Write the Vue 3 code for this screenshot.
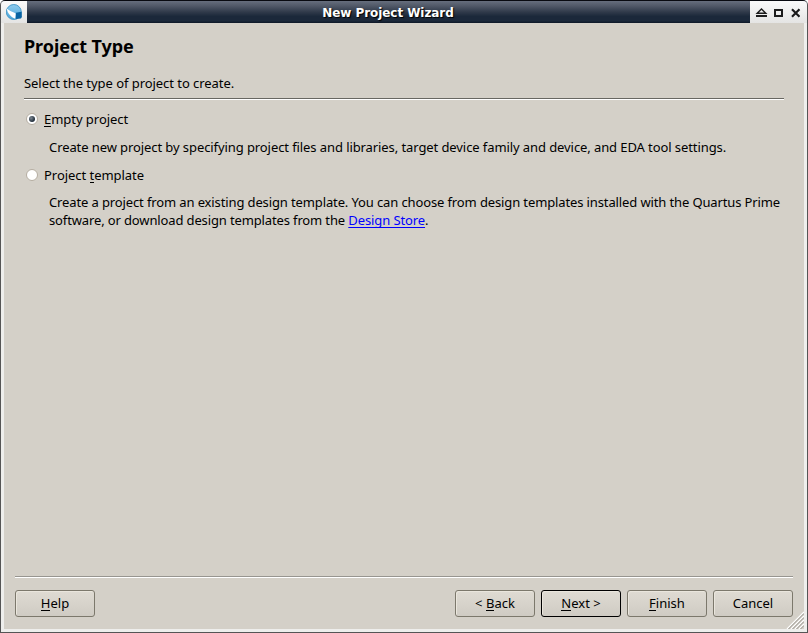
<script setup>
import { ref } from 'vue'

const projectType = ref('empty')
</script>

<template>
  <div class="window">
    <header class="titlebar">
      <div class="app-icon">
        <svg width="18" height="18" viewBox="0 0 18 18">
          <defs>
            <linearGradient id="globe" x1="0" y1="0" x2="0" y2="1">
              <stop offset="0" stop-color="#8fcbed" />
              <stop offset="1" stop-color="#4ba6da" />
            </linearGradient>
          </defs>
          <circle cx="7.8" cy="8" r="7.5" fill="url(#globe)" stroke="#3d94c6" stroke-width="0.9" />
          <path d="M0.8 4.5C3 7 6.5 7.5 10 9.5L9.2 14.8C5 13 1.500 9.500 .8 4.500z" fill="#fff" />
          <path d="M9.8 8.8l5.800-1 .3 5.200-1 1.500-5.100.5z" fill="#0863a2" />
        </svg>
      </div>
      <h1 class="caption">New Project Wizard</h1>
      <div class="controls">
        <svg width="56" height="21" viewBox="0 0 56 21" fill="none" stroke="#1c1c1c" stroke-width="2">
          <path d="M7.200 12.300L11.500 8l4.300 4.300z" stroke-width="1.400" />
          <path d="M6 15h11" />
          <path d="M25 9h7v6h-7z" />
          <path d="M42 8.200l7.500 7.500M49.500 8.200l-7.500 7.500" stroke-width="2.200" />
        </svg>
      </div>
    </header>

    <div class="frame">
      <main class="page">
        <h2 class="heading">Project Type</h2>
        <p class="intro">Select the type of project to create.</p>
        <div class="rule"></div>
        <label class="option" @click="projectType = 'empty'">
          <span class="radio" :class="{ checked: projectType === 'empty' }"></span>
          <span class="option-label"><u>E</u>mpty project</span>
        </label>
        <p class="detail first">
          <span>Create new project by specifying project files and libraries, target device family and device, and EDA tool settings.</span>
        </p>
        <label class="option template" @click="projectType = 'template'">
          <span class="radio" :class="{ checked: projectType === 'template' }"></span>
          <span class="option-label">Project <u>t</u>emplate</span>
        </label>
        <p class="detail second">
          <span>Create a project from an existing design template. You can choose from design templates installed with the Quartus Prime</span>
          <span class="last-line">software, or download design templates from the <a>Design Store</a>.</span>
        </p>
      </main>

      <footer class="footer">
        <div class="buttons">
          <button class="help"><span><u>H</u>elp</span></button>
          <button><span>&lt; <u>B</u>ack</span></button>
          <button class="default"><span><u>N</u>ext &gt;</span></button>
          <button><span><u>F</u>inish</span></button>
          <button><span>Cancel</span></button>
        </div>
        <svg class="grip" width="18" height="18" viewBox="0 0 18 18" fill="none">
          <path d="M1 18L18 1M5 18L18 5M9 18L18 9M13 18L18 13" stroke="#fff" stroke-width="1.2" />
          <path d="M2.5 18L18 2.5M6.5 18L18 6.5M10.5 18L18 10.5M14.5 18L18 14.5" stroke="#99968f" />
        </svg>
      </footer>
    </div>
  </div>
</template>

<style>
body {
  margin: 0;
  background: #fff;
}
</style>

<style scoped>
* {
  box-sizing: border-box;
}

.window {
  width: 808px;
  height: 633px;
  display: flex;
  flex-direction: column;
  overflow: hidden;
  border: 1px solid #555;
  border-top-color: #080a10;
  border-radius: 5px 5px 0 0;
  background: #eeeeec;
  color: #000;
  font-family: "Noto Sans", sans-serif;
  font-size: 13px;
}

.titlebar {
  height: 22px;
  display: flex;
  background: linear-gradient(#666e7d 0, #535b6a 20%, #303a4a 50%, #1b283a 70%, #1b283a 90%, #0d1726 100%);
}

.app-icon,
.controls {
  background: linear-gradient(#fafafa, #e4e4e3);
}

.app-icon {
  width: 26px;
  padding: 3px 0 0 5px;
}

.app-icon svg,
.controls svg {
  display: block;
}

.controls {
  width: 57px;
}

.caption {
  flex: 1;
  margin: 0;
  padding-top: 1px;
  padding-right: 1px;
  text-align: center;
  color: #fff;
  font: bold 12px/23px "DejaVu Sans", sans-serif;
  letter-spacing: -0.06px;
  text-shadow: 1px 1px 1px #000;
}

.frame {
  flex: 1;
  margin: 0 3px 3px;
  display: flex;
  flex-direction: column;
  background: #d4d0c8;
}

.page {
  flex: 1;
  padding: 11px 20px 0;
}

.heading {
  margin: 0;
  font-size: 18px;
  line-height: 24px;
  letter-spacing: -0.06px;
}

.intro {
  margin: 15px 0 0;
  line-height: 20px;
  letter-spacing: -0.05px;
}

.rule {
  height: 2px;
  margin-top: 5px;
  background: linear-gradient(#686762 50%, #fff 50%);
}

.option {
  display: flex;
  align-items: center;
  gap: 6px;
  height: 20px;
  margin-top: 9px;
  padding-left: 2px;
}

.option.template {
  margin-top: 8px;
}

.option-label {
  letter-spacing: -0.04px;
}

.radio {
  width: 12px;
  height: 12px;
  display: grid;
  place-items: center;
  border: 1px solid #b5ada1;
  border-radius: 50%;
  background: #fff;
}

.radio.checked::after {
  content: "";
  width: 6px;
  height: 6px;
  border-radius: 50%;
  background: radial-gradient(circle at 35% 35%, #7c8791, #202d3a 70%);
}

.detail {
  margin: 8px 0 0;
  padding-left: 25px;
  line-height: 20px;
  white-space: nowrap;
}

.detail.first {
  letter-spacing: -0.087px;
}

.detail.second {
  line-height: 18px;
  letter-spacing: -0.122px;
}

.detail span {
  display: block;
}

.detail .last-line {
  letter-spacing: -0.132px;
}

.last-line a {
  letter-spacing: -0.1px;
}

u {
  text-decoration: none;
  box-shadow: inset 0 -1px #000;
  display: inline-block;
  line-height: 16px;
}

a {
  color: #00f;
  text-decoration: underline;
  text-decoration-thickness: 1px;
  text-decoration-skip-ink: none;
  text-underline-offset: 2px;
}

.footer {
  height: 53px;
  display: flex;
  flex-direction: column;
  position: relative;
  margin-left: 11px;
  margin-right: 11px;
  border-top: 1px solid #979590;
  box-shadow: inset 0 1px #fff;
}

.buttons {
  display: flex;
  gap: 6px;
  padding-top: 13px;
}

button {
  width: 80px;
  height: 27px;
  padding: 0 0 2px;
  border: 1px solid #7c786c;
  border-radius: 3px;
  background: linear-gradient(#dfdbd3, #cfcbc3);
  box-shadow: inset 1px 1px #eae6dd;
  color: #000;
  font: inherit;
}

button.help {
  margin-right: auto;
}

button.default {
  border-color: #000;
}

.grip {
  position: absolute;
  right: -11px;
  bottom: 0;
}
</style>
